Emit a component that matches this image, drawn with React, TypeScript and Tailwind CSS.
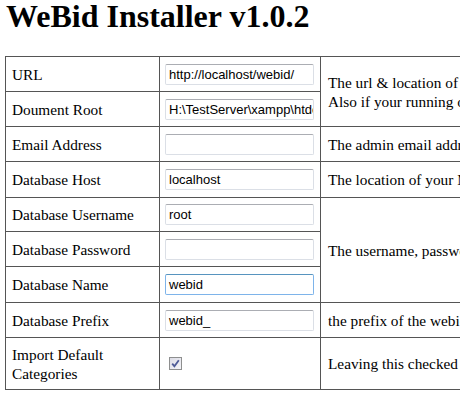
import React from "react";

const serif = { fontFamily: '"Liberation Serif", "Times New Roman", serif' };

function Field({ value, focus }: { value: string; focus?: boolean }) {
  return (
    <div
      className={
        "h-[21px] w-[149px] rounded-[2px] border bg-white pl-[3px] text-[13px] leading-[19px] text-black overflow-hidden whitespace-nowrap " +
        (focus
          ? "border-[#7eb4ea] border-t-[#5794bf]"
          : "border-[#dbdfe6] border-t-[#abadb3]")
      }
      style={{ fontFamily: '"Liberation Sans", Arial, sans-serif' }}
    >
      {value}
    </div>
  );
}

function Check() {
  return (
    <div className="flex h-[13px] w-[13px] items-center justify-center border border-[#8e8f8f] bg-gradient-to-br from-[#dcdce6] to-[#f4f4f8]">
      <svg width="9" height="9" viewBox="0 0 9 9">
        <path d="M1.2 4.6 L3.4 7.2 L7.8 1.2" fill="none" stroke="#4d5a97" strokeWidth="1.8" />
      </svg>
    </div>
  );
}

const td = "border border-[#555] align-middle";
const l = td + " px-[6px] w-[154px]";
const m = td + " pl-[5px] w-[161px]";
const r = td + " pl-[7px] whitespace-nowrap";

export default function App() {
  return (
    <div className="w-[460px] h-[402px] overflow-hidden bg-white pl-[5px] text-black" style={serif}>
      <h1 className="h-[56px] pl-[1px] text-[32px] font-bold leading-[32px] whitespace-nowrap">WeBid Installer v1.0.2</h1>
      <table className="border-collapse text-[15.3px] leading-[19px] w-[720px] table-fixed">
        <colgroup>
          <col className="w-[154px]" />
          <col className="w-[161px]" />
          <col />
        </colgroup>
        <tbody>
          <tr className="h-[35px]">
            <td className={l}>URL</td>
            <td className={m}><Field value="http://localhost/webid/" /></td>
            <td className={r} rowSpan={2}>
              <div>The url &amp; location of the webid installation on your server</div>
              <div>Also if your running on windows make sure you use \\ instead of \</div>
            </td>
          </tr>
          <tr className="h-[35px]">
            <td className={l}>Doument Root</td>
            <td className={m}><Field value="H:\TestServer\xampp\htdocs\webid\" /></td>
          </tr>
          <tr className="h-[35px]">
            <td className={l}>Email Address</td>
            <td className={m}><Field value="" /></td>
            <td className={r}>The admin email address</td>
          </tr>
          <tr className="h-[36px]">
            <td className={l}>Database Host</td>
            <td className={m}><Field value="localhost" /></td>
            <td className={r}>The location of your MySQL database</td>
          </tr>
          <tr className="h-[34px]">
            <td className={l}>Database Username</td>
            <td className={m}><Field value="root" /></td>
            <td className={r} rowSpan={3}>The username, password and database name of your MySQL database</td>
          </tr>
          <tr className="h-[35px]">
            <td className={l}>Database Password</td>
            <td className={m}><Field value="" /></td>
          </tr>
          <tr className="h-[36px]">
            <td className={l}>Database Name</td>
            <td className={m}><Field value="webid" focus /></td>
          </tr>
          <tr className="h-[35px]">
            <td className={l}>Database Prefix</td>
            <td className={m}><Field value="webid_" /></td>
            <td className={r}>the prefix of the webid tables in the database</td>
          </tr>
          <tr className="h-[52px]">
            <td className={l}>Import Default Categories</td>
            <td className={td + " pl-[9px] w-[161px]"}><Check /></td>
            <td className={r}>Leaving this checked is recommended</td>
          </tr>
        </tbody>
      </table>
    </div>
  );
}
